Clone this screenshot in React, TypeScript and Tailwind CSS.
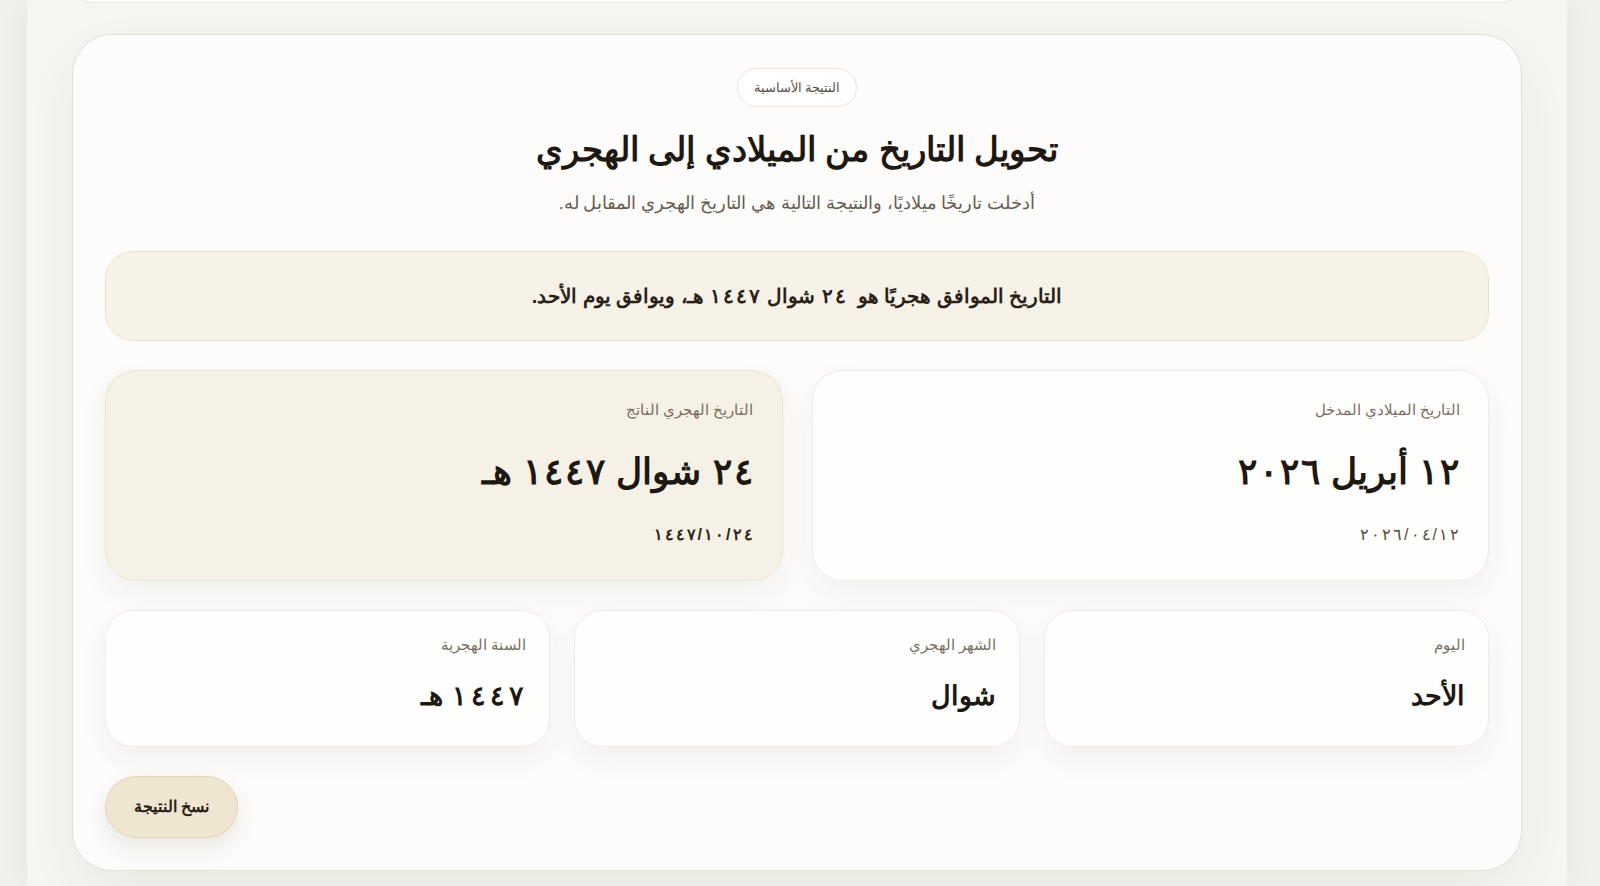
import React from "react";

function Sp({ s, p = "px-[1px]" }: { s: string; p?: string }) {
  return (
    <>
      {Array.from(s).map((c, i) => (
        <span key={i} className={p}>
          {c}
        </span>
      ))}
    </>
  );
}

function InfoCard({
  label,
  value,
  sub,
  tone,
}: {
  label: string;
  value: React.ReactNode;
  sub: string;
  tone: "white" | "beige";
}) {
  return (
    <div
      className={
        tone === "beige"
          ? "h-[211px] rounded-[30px] border border-[#ece4d4] bg-[#f6f1e6] px-[28px] pt-[28px] shadow-[0_12px_30px_rgba(60,45,20,0.06)]"
          : "h-[211px] rounded-[30px] border border-[#efece6] bg-[#fefefd] px-[28px] pt-[28px] shadow-[0_12px_30px_rgba(60,45,20,0.06)]"
      }
    >
      <div className="text-[15px] leading-[22px] text-[#7a6f62]">{label}</div>
      <div className="mt-[27px] text-[36px] font-bold leading-[47px] text-[#1d1812]">{value}</div>
      <div
        className={
          tone === "beige"
            ? "mt-[28px] text-[16px] font-semibold leading-[24px] text-[#2e261d]"
            : "mt-[28px] text-[16px] leading-[24px] text-[#554b40]"
        }
      >
        <Sp s={sub} />
      </div>
    </div>
  );
}

function SmallCard({ label, value }: { label: string; value: React.ReactNode }) {
  return (
    <div className="h-[137px] rounded-[28px] border border-[#efece6] bg-[#fefefd] px-[23px] pt-[23px] shadow-[0_12px_30px_rgba(60,45,20,0.06)]">
      <div className="text-[15px] leading-[22px] text-[#7a6f62]">{label}</div>
      <div className="mt-[22px] text-[27px] font-bold leading-[36px] text-[#1d1812]">{value}</div>
    </div>
  );
}

export default function App() {
  return (
    <div className="min-h-[886px] bg-[#f2f0eb] font-['Arial','Liberation_Sans',sans-serif]">
      <div className="ml-[27px] mr-[33px] min-h-[886px] overflow-hidden bg-[#f6f5f2] px-[45px] shadow-[0_0_30px_rgba(80,60,30,0.06)]">
        <div className="mt-[-37px] h-[40px] rounded-[40px] border border-[#e8e5df] bg-[#fdfcfb]" />
        <div
          dir="rtl"
          className="mt-[31px] rounded-[40px] border border-[#e4e0d8] bg-[#fdfcfb] px-[32px] pb-[32px] pt-[33px] shadow-[0_20px_50px_rgba(70,50,20,0.06)]"
        >
          <div className="flex justify-center">
            <div className="flex h-[39px] items-center rounded-full border border-[#ebe6dd] bg-white px-[16px] text-[13px] text-[#5b5045]">
              النتيجة الأساسية
            </div>
          </div>
          <h1 className="mt-[20px] text-center text-[34px] font-bold leading-[44px] text-[#1d1812]">
            تحويل التاريخ من الميلادي إلى الهجري
          </h1>
          <p className="mt-[18px] text-center text-[17.5px] leading-[28px] text-[#665d52]">
            أدخلت تاريخًا ميلاديًا، والنتيجة التالية هي التاريخ الهجري المقابل له.
          </p>
          <div className="mt-[34px] flex h-[90px] items-center justify-center rounded-[28px] border border-[#ece2cf] bg-[#f7f2e8] text-[20px] font-bold text-[#2a2118]">
            <span>
              التاريخ الموافق هجريًا هو&nbsp; <Sp s="٢٤" /> شوال <Sp s="١٤٤٧" /> هـ، ويوافق يوم الأحد.
            </span>
          </div>
          <div className="mt-[29px] grid grid-cols-2 gap-[29px]">
            <InfoCard
              tone="white"
              label="التاريخ الميلادي المدخل"
              value={
                <>
                  <Sp s="١٢" /> أبريل <Sp s="٢٠٢٦" />
                </>
              }
              sub="٢٠٢٦/٠٤/١٢"
            />
            <InfoCard
              tone="beige"
              label="التاريخ الهجري الناتج"
              value={
                <>
                  <Sp s="٢٤" /> شوال <Sp s="١٤٤٧" /> هـ
                </>
              }
              sub="١٤٤٧/١٠/٢٤"
            />
          </div>
          <div className="mt-[29px] grid grid-cols-3 gap-[24px]">
            <SmallCard label="اليوم" value="الأحد" />
            <SmallCard label="الشهر الهجري" value="شوال" />
            <SmallCard
              label="السنة الهجرية"
              value={
                <>
                  <Sp s="١٤٤٧" p="px-[2px]" /> هـ
                </>
              }
            />
          </div>
          <div className="mt-[29px] flex justify-end">
            <button className="flex h-[62px] w-[133px] items-center justify-center rounded-full border border-[#e2d4b9] bg-[#f0e5d1] text-[16px] font-bold text-[#2a2118] shadow-[0_10px_22px_rgba(70,50,20,0.1)]">
              نسخ النتيجة
            </button>
          </div>
        </div>
      </div>
    </div>
  );
}
